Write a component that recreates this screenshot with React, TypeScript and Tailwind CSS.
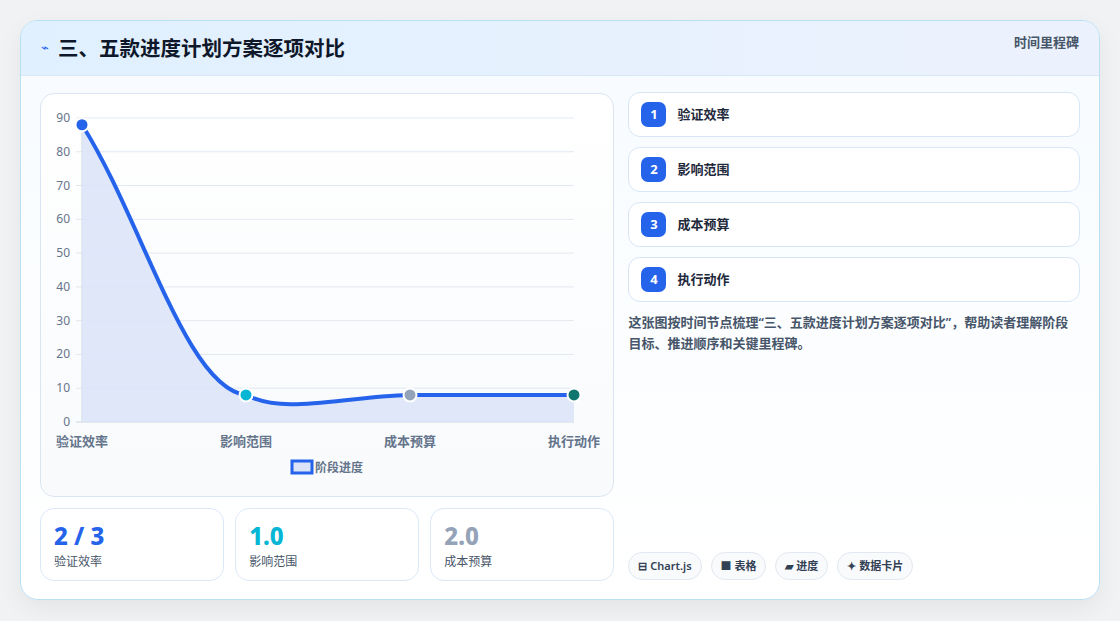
import React from "react";

const f = { fontFamily: '"Noto Sans","Noto Sans CJK SC",sans-serif' };

function Chart() {
  const X0 = 41, X1 = 533, Y0 = 328; const k = 3.378;
  const y = (v: number) => Y0 - v * k;
  const xs = [X0, X0 + 164, X0 + 328, X1];
  const grid = [0, 10, 20, 30, 40, 50, 60, 70, 80, 90];
  const line = `M${xs[0]},${y(88)} C${xs[0] + 60},${y(60)} ${xs[1] - 60},${y(10)} ${xs[1]},${y(8)} C${xs[1] + 40},${y(2)} ${xs[2] - 70},${y(7.5)} ${xs[2]},${y(8)} L${xs[3]},${y(8)}`;
  return (
    <svg width="574" height="403" className="absolute left-0 top-0" style={f}>
      {grid.map((g) => (
        <g key={g}>
          <line x1={X0 - 6} x2={X1} y1={y(g)} y2={y(g)} stroke={g === 0 ? "#cbd5e1" : "#e2e8f0"} />
          <text x={X0 - 12} y={y(g) + 4} fontSize="12" fill="#64748b" textAnchor="end">{g}</text>
        </g>
      ))}
      <line x1={X0} x2={X0} y1={y(90)} y2={Y0} stroke="#cbd5e1" />
      <path d={`${line} L${X1},${Y0} L${X0},${Y0} Z`} fill="#dbe4f8" opacity="0.9" />
      <path d={line} fill="none" stroke="#2563eb" strokeWidth="4" />
      {[["#2563eb", 88], ["#06b6d4", 8], ["#94a3b8", 8], ["#0f766e", 8]].map(([c, v], i) => (
        <circle key={i} cx={xs[i]} cy={y(v as number)} r="6.5" fill={c as string} stroke="#fff" strokeWidth="2" />
      ))}
      {["验证效率", "影响范围", "成本预算", "执行动作"].map((t, i) => (
        <text key={t} x={i === 0 ? 15 : i === 3 ? 559 : xs[i]} y={352} fontSize="13" fontWeight="600" fill="#64748b" textAnchor={i === 0 ? "start" : i === 3 ? "end" : "middle"}>{t}</text>
      ))}
      <rect x="251" y="367" width="20" height="12" fill="#dbe4f8" stroke="#2563eb" strokeWidth="3" />
      <text x="274" y="378" fontSize="12" fontWeight="600" fill="#64748b">阶段进度</text>
    </svg>
  );
}

export default function App() {
  const items = ["验证效率", "影响范围", "成本预算", "执行动作"];
  return (
    <div className="w-[1120px] h-[621px] bg-[#f1f2f4] pt-[20px] pl-[20px]" style={f}>
      <div className="w-[1080px] h-[580px] rounded-[18px] border border-[#bae0f5] bg-gradient-to-b from-[#f7fbff] to-white overflow-hidden shadow-[0_8px_24px_rgba(0,0,0,0.06)]">
        <div className="h-[55px] bg-gradient-to-r from-[#e0f0fe] to-[#ecf2fd] border-b border-[#d6e8f7] flex items-center px-[20px]">
          <span className="text-[#2563eb] text-[13px] mr-[9px]">⌁</span>
          <span className="text-[20.5px] font-bold text-[#0f172a]">三、五款进度计划方案逐项对比</span>
          <span className="ml-auto text-[13px] text-[#475569] font-semibold -mt-[10px]">时间里程碑</span>
        </div>
        <div className="flex gap-[14px] px-[19px] pt-[17px]">
          <div className="w-[575px] flex flex-col gap-[11px]">
            <div className="relative h-[404px] rounded-[14px] border border-[#dbe5f1] bg-gradient-to-b from-white to-[#f8fafc]">
              <Chart />
            </div>
            <div className="flex gap-[11px]">
              {[["2 / 3", "text-[#2563eb]", "验证效率"], ["1.0", "text-[#06b6d4]", "影响范围"], ["2.0", "text-[#94a3b8]", "成本预算"]].map(([v, c, l]) => (
                <div key={l} className="flex-1 h-[73px] rounded-[14px] border border-[#dbe8f7] bg-white px-[13px] pt-[12px]">
                  <div className={`text-[24px] leading-[30px] font-extrabold ${c}`}>{v}</div>
                  <div className="text-[12px] text-[#475569] mt-[2px]">{l}</div>
                </div>
              ))}
            </div>
          </div>
          <div className="w-[452px] h-[488px] flex flex-col">
            <div className="flex flex-col gap-[10px] -mt-[1px]">
              {items.map((t, i) => (
                <div key={t} className="h-[45px] rounded-[12px] border border-[#d6e6f7] bg-white flex items-center px-[12px] gap-[11px]">
                  <span className="w-[25px] h-[25px] rounded-[7px] bg-[#2563eb] text-white text-[13px] font-bold flex items-center justify-center">{i + 1}</span>
                  <span className="text-[13px] font-semibold text-[#1e293b]">{t}</span>
                </div>
              ))}
            </div>
            <p className="mt-[10px] text-[13px] leading-[21px] font-semibold text-[#475569]">这张图按时间节点梳理“三、五款进度计划方案逐项对比”，帮助读者理解阶段目标、推进顺序和关键里程碑。</p>
            <div className="mt-auto flex gap-[9px] pb-[1px]">
              {["⊟ Chart.js", "■ 表格", "▰ 进度", "✦ 数据卡片"].map((t) => (
                <span key={t} className="h-[28px] px-[9px] rounded-full border border-[#e2e8f0] bg-[#f8fafc] text-[11px] font-semibold text-[#334155] flex items-center">{t}</span>
              ))}
            </div>
          </div>
        </div>
      </div>
    </div>
  );
}
